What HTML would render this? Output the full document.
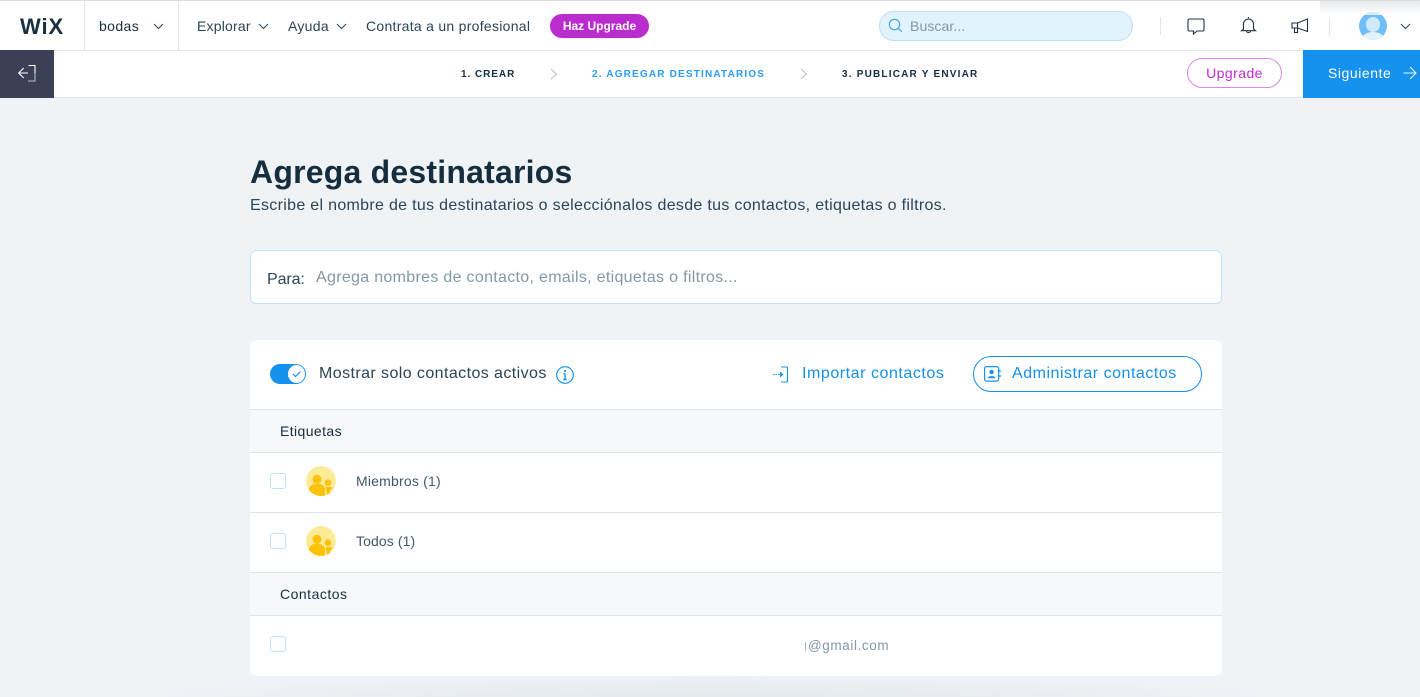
<!DOCTYPE html>
<html lang="es"><head><meta charset="utf-8"><title>Agrega destinatarios</title>
<style>
*{box-sizing:border-box}
html,body{margin:0;padding:0}
body{width:1420px;height:697px;overflow:hidden;position:relative;background:#eff3f6;font-family:"Liberation Sans",sans-serif;color:#162d3d}
.a{position:absolute;white-space:nowrap}
.t{position:absolute;white-space:nowrap;line-height:20px}
svg{position:absolute;overflow:visible;fill:none}
</style></head><body>
<!-- top bar -->
<div class="a" style="left:0;top:0;width:1420px;height:51px;background:#fff;border-top:1px solid #dcdfe2;border-bottom:1px solid #e3e8ec"></div>
<div class="a" style="left:84px;top:1px;width:1px;height:49px;background:#dfe5eb"></div>
<div class="a" style="left:178px;top:1px;width:1px;height:49px;background:#dfe5eb"></div>
<div class="t" style="left:20px;top:15px;font-size:22px;line-height:24px;font-weight:700;color:#1a3040;letter-spacing:.9px">WiX</div>
<div class="t" style="left:99px;top:16px;font-size:14px;color:#162d3d;letter-spacing:.4px">bodas</div>
<svg style="left:153px;top:23px" width="11" height="7"><path d="M1 1l4.500 4.500L10 1" stroke="#2b4458"/></svg>
<div class="t" style="left:197px;top:16px;font-size:14px;color:#2b4458;letter-spacing:.2px">Explorar</div>
<svg style="left:258px;top:23px" width="11" height="7"><path d="M1 1l4.500 4.500L10 1" stroke="#2b4458"/></svg>
<div class="t" style="left:288px;top:16px;font-size:14px;color:#2b4458;letter-spacing:.3px">Ayuda</div>
<svg style="left:336px;top:23px" width="11" height="7"><path d="M1 1l4.500 4.500L10 1" stroke="#2b4458"/></svg>
<div class="t" style="left:366px;top:16px;font-size:14px;color:#2b4458;letter-spacing:.28px">Contrata a un profesional</div>
<div class="a" style="left:550px;top:14px;width:99px;height:24px;border-radius:12px;background:#bb2cce;color:#fff;font-size:12px;font-weight:700;line-height:24px;text-align:center">Haz Upgrade</div>
<div class="a" style="left:879px;top:11px;width:254px;height:30px;border-radius:15px;background:#e3f3fe;border:1px solid #b5e0fb"></div>
<svg style="left:888px;top:18px" width="16" height="16"><circle cx="6.500" cy="6.500" r="5.200" stroke="#3aa3ee" stroke-width="1.100"/><path d="M10.300 10.300l3.500 3.500" stroke="#3aa3ee" stroke-width="1.100"/></svg>
<div class="t" style="left:910px;top:16px;font-size:14px;color:#8497a6;letter-spacing:.1px">Buscar...</div>
<div class="a" style="left:1160px;top:17px;width:1px;height:18px;background:#dfe5eb"></div>
<svg style="left:1187px;top:18px" width="18" height="18"><path d="M2.500 1h13a1.500 1.500 0 0 1 1.500 1.500v9a1.500 1.500 0 0 1-1.500 1.500H10l-3.500 3V13H2.500A1.500 1.500 0 0 1 1 11.500v-9A1.500 1.500 0 0 1 2.500 1z" stroke="#1c3347" stroke-width="1.100"/></svg>
<svg style="left:1240px;top:16px" width="17" height="19"><path d="M8.500 1v1.200M3.500 13V8a5 5 0 0 1 10 0v5l2 1.700H1.500zM6.500 14.700a2 2 0 0 0 4 0" stroke="#1c3347" stroke-width="1.100"/></svg>
<svg style="left:1291px;top:17px" width="18" height="18"><path d="M1 6h5.500L16.500 2v12.500L6.500 11H1zM6.500 6v5M3.500 11v4.500h3V11" stroke="#1c3347" stroke-width="1.100"/></svg>
<div class="a" style="left:1329px;top:17px;width:1px;height:18px;background:#dfe5eb"></div>
<div class="a" style="left:1359px;top:12px;width:28px;height:28px;border-radius:50%;background:#6fbdfa;overflow:hidden"><div class="a" style="left:7px;top:5px;width:14px;height:15px;border-radius:7px;background:#cfe9fd"></div><div class="a" style="left:3px;top:20px;width:22px;height:14px;border-radius:50%;background:#e3f3fe"></div></div>
<svg style="left:1400px;top:23px" width="11" height="7"><path d="M1 1l4.500 4.500L10 1" stroke="#2b4458"/></svg>
<div class="a" style="left:1320px;top:1px;width:100px;height:14px;background:linear-gradient(to bottom,#e0e2e4,#fff);opacity:.75"></div>
<!-- second bar -->
<div class="a" style="left:0;top:51px;width:1420px;height:47px;background:#fff;border-bottom:1px solid #dfe5eb"></div>
<div class="a" style="left:0;top:50px;width:54px;height:48px;background:#3b4057"></div>
<svg style="left:18px;top:64px" width="18" height="18"><path d="M10.500 1.500H17V9" stroke="#fff" stroke-width="1.100"/><path d="M17 9v8h-7" stroke="#a8c4d8" stroke-width="1.100"/><path d="M10 9H.7M5.700 4L.7 9l5 5" stroke="#fff" stroke-width="1.100"/></svg>
<div class="t" style="left:461px;top:65px;font-size:10px;font-weight:700;letter-spacing:.95px;color:#162d3d">1. CREAR</div>
<svg style="left:550px;top:68px" width="8" height="12"><path d="M1 1l5.500 5L1 11" stroke="#b6c1cb"/></svg>
<div class="t" style="left:592px;top:65px;font-size:10px;font-weight:700;letter-spacing:1.18px;color:#2b9cf2">2. AGREGAR DESTINATARIOS</div>
<svg style="left:800px;top:68px" width="8" height="12"><path d="M1 1l5.500 5L1 11" stroke="#b6c1cb"/></svg>
<div class="t" style="left:842px;top:65px;font-size:10px;font-weight:700;letter-spacing:1.2px;color:#162d3d">3. PUBLICAR Y ENVIAR</div>
<div class="a" style="left:1187px;top:58px;width:95px;height:30px;border:1px solid #dd85e8;border-radius:15px;color:#bb2cce;font-size:14px;line-height:28px;text-align:center;letter-spacing:.45px">Upgrade</div>
<div class="a" style="left:1303px;top:50px;width:117px;height:48px;background:#1591ee"></div>
<div class="t" style="left:1328px;top:63px;font-size:14px;color:#fff;letter-spacing:.55px">Siguiente</div>
<svg style="left:1403px;top:66px" width="15" height="15"><path d="M.5 7h12.500M7 1l6 6-6 6" stroke="#e6f3fe" stroke-width="1.100"/></svg>
<!-- heading -->
<div class="t" style="left:250px;top:152px;font-size:32px;line-height:40px;font-weight:700;color:#162d3d;letter-spacing:.21px">Agrega destinatarios</div>
<div class="t" style="left:250px;top:196px;font-size:16px;color:#2b4458;letter-spacing:.31px">Escribe el nombre de tus destinatarios o selecciónalos desde tus contactos, etiquetas o filtros.</div>
<!-- input -->
<div class="a" style="left:250px;top:250px;width:972px;height:54px;background:#fff;border:1px solid #bfe3fb;border-radius:6px"></div>
<div class="t" style="left:267px;top:270px;font-size:16px;color:#2b4458;letter-spacing:-.1px">Para:</div>
<div class="t" style="left:316px;top:268px;font-size:16px;color:#8497a6;letter-spacing:.31px">Agrega nombres de contacto, emails, etiquetas o filtros...</div>
<!-- card -->
<div class="a" style="left:250px;top:340px;width:972px;height:336px;background:#fff;border-radius:8px"></div>
<div class="a" style="left:270px;top:364px;width:36px;height:20px;border-radius:10px;background:#1591ee"></div>
<div class="a" style="left:288px;top:365px;width:17px;height:18px;border-radius:50%;background:#fff"></div>
<svg style="left:292px;top:370px" width="10" height="8"><path d="M1 4l2.500 2.500L8.500 1.500" stroke="#1591ee" stroke-width="1.200"/></svg>
<div class="t" style="left:319px;top:364px;font-size:16px;color:#2b4458;letter-spacing:.42px">Mostrar solo contactos activos</div>
<svg style="left:556px;top:366px" width="18" height="18"><circle cx="9" cy="9" r="8.300" stroke="#1591ee" stroke-width="1.200"/><path d="M9 7.500v6M7.300 7.800H9M7.300 13.500h3.400" stroke="#1591ee" stroke-width="1.400"/><circle cx="9" cy="5" r="1.100" fill="#1591ee"/></svg>
<svg style="left:772px;top:366px" width="17" height="17"><path d="M9 1h5.500a1 1 0 0 1 1 1v13a1 1 0 0 1-1 1H9" stroke="#1591ee" stroke-width="1.100"/><path d="M1 8.500h10" stroke="#1591ee" stroke-dasharray="1.500 1" stroke-width="1.100"/><path d="M8 5.500l3.500 3-3.500 3z" fill="#1591ee"/></svg>
<div class="t" style="left:802px;top:364px;font-size:16px;color:#1591ee;letter-spacing:.55px">Importar contactos</div>
<div class="a" style="left:973px;top:356px;width:229px;height:36px;border:1px solid #1591ee;border-radius:18px"></div>
<svg style="left:984px;top:366px" width="17" height="16"><rect x=".6" y=".6" width="14" height="14.500" rx="2" stroke="#1591ee" stroke-width="1.200"/><path d="M16 4v2M16 9v2" stroke="#1591ee" stroke-width="1.200"/><circle cx="7.600" cy="6" r="2.200" fill="#1591ee"/><path d="M3.800 12.200c0-2.800 7.600-2.800 7.600 0z" fill="#1591ee"/></svg>
<div class="t" style="left:1012px;top:364px;font-size:16px;color:#1591ee;letter-spacing:.52px">Administrar contactos</div>
<!-- Etiquetas -->
<div class="a" style="left:250px;top:409px;width:972px;height:44px;background:#f6f8f9;border-top:1px solid #dfe5eb;border-bottom:1px solid #dfe5eb"></div>
<div class="t" style="left:280px;top:421px;font-size:14px;color:#162d3d;letter-spacing:.4px">Etiquetas</div>
<div class="a" style="left:270px;top:473px;width:16px;height:16px;border:1px solid #bfe3fb;border-radius:3px"></div>
<svg style="left:306px;top:466px;clip-path:circle(15px)" width="30" height="30"><circle cx="15" cy="15" r="15" fill="#feeb97"/><circle cx="11" cy="13.300" r="4.500" fill="#fdc209"/><path d="M3 31v-7c0-8.500 16-8.500 16 0v7z" fill="#fdc209"/><circle cx="22" cy="16.700" r="3.300" fill="#fdc209"/><path d="M19.500 21h6.500l.5 1-2.500 3v4h-3z" fill="#fdc209"/></svg>
<div class="t" style="left:356px;top:471px;font-size:14px;color:#3f5a6f;letter-spacing:.2px">Miembros (1)</div>
<div class="a" style="left:250px;top:512px;width:972px;height:1px;background:#dfe5eb"></div>
<div class="a" style="left:270px;top:533px;width:16px;height:16px;border:1px solid #bfe3fb;border-radius:3px"></div>
<svg style="left:306px;top:526px;clip-path:circle(15px)" width="30" height="30"><circle cx="15" cy="15" r="15" fill="#feeb97"/><circle cx="11" cy="13.300" r="4.500" fill="#fdc209"/><path d="M3 31v-7c0-8.500 16-8.500 16 0v7z" fill="#fdc209"/><circle cx="22" cy="16.700" r="3.300" fill="#fdc209"/><path d="M19.500 21h6.500l.5 1-2.500 3v4h-3z" fill="#fdc209"/></svg>
<div class="t" style="left:356px;top:531px;font-size:14px;color:#3f5a6f;letter-spacing:.1px">Todos (1)</div>
<!-- Contactos -->
<div class="a" style="left:250px;top:572px;width:972px;height:44px;background:#f6f8f9;border-top:1px solid #dfe5eb;border-bottom:1px solid #dfe5eb"></div>
<div class="t" style="left:280px;top:584px;font-size:14px;color:#162d3d;letter-spacing:.5px">Contactos</div>
<div class="a" style="left:270px;top:636px;width:16px;height:16px;border:1px solid #bfe3fb;border-radius:3px"></div>
<div class="a" style="left:805px;top:642px;width:1px;height:9px;background:#a9b7c2"></div>
<div class="t" style="left:808px;top:636px;font-size:13.500px;color:#8497a6;letter-spacing:.6px">@gmail.com</div>
<div class="a" style="left:0;top:676px;width:1420px;height:21px;background:radial-gradient(ellipse 560px 21px at 710px 21px,#e4e9ec 0%,#e9edf0 50%,#eff3f6 100%)"></div>
</body></html>
